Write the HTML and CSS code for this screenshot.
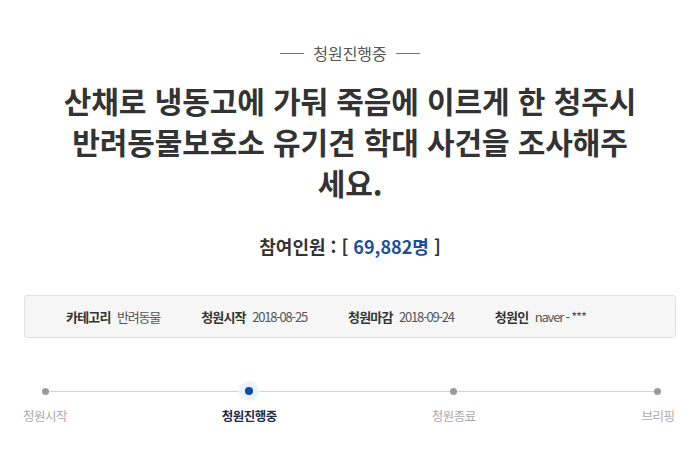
FILE: index.html
```html
<!DOCTYPE html>
<html lang="ko">
    <head>
        <meta charset="UTF-8">
        <meta name="viewport" content="width=device-width, initial-scale=1.0">
        <title>청원진행중</title>
        <link rel="stylesheet" href="styles.css">
    </head>
    <body>
        <div class="petition">
            <div class="status"><span>청원진행중</span></div>
            <h3 class="title">산채로 냉동고에 가둬 죽음에 이르게 한 청주시<br>반려동물보호소 유기견 학대 사건을 조사해주<br>세요.</h3>
            <h2 class="count">참여인원 : [ <span>69,882명</span> ]</h2>
            <ul class="info">
                <li><b>카테고리</b> 반려동물</li>
                <li><b>청원시작</b> 2018-08-25</li>
                <li><b>청원마감</b> 2018-09-24</li>
                <li><b>청원인</b> naver - ***</li>
            </ul>
            <ol class="steps">
                <li><i></i><span>청원시작</span></li>
                <li class="on"><i></i><span>청원진행중</span></li>
                <li><i></i><span>청원종료</span></li>
                <li><i></i><span>브리핑</span></li>
            </ol>
        </div>
    </body>
</html>
```

FILE: styles.css
```css
body {
    margin: 0;
    background: #fff;
    color: #333;
    font-family: "Noto Sans CJK KR", "Noto Sans", sans-serif;
}
.petition {
    padding: 43px 24px 0;
}
.status {
    display: flex;
    justify-content: center;
    align-items: center;
    gap: 9px;
    font-size: 16px;
    line-height: 20px;
    color: #555;
}
.status::before,
.status::after {
    content: "";
    width: 24px;
    height: 1px;
    background: #777;
}
.title {
    margin: 17px 0 0;
    text-align: center;
    font-size: 30px;
    line-height: 41px;
    font-weight: bold;
    letter-spacing: -0.1px;
    color: #333;
}
.count {
    margin: 29px 0 0;
    text-align: center;
    font-size: 18px;
    line-height: 28px;
    font-weight: bold;
    color: #333;
}
.count span {
    color: #1b4f9c;
}
.info {
    list-style: none;
    margin: 35px 0 0;
    padding: 0 0 0 41px;
    height: 41px;
    display: flex;
    align-items: center;
    gap: 41px;
    background: #f6f6f6;
    border: 1px solid #e1e1e1;
    border-radius: 3px;
    font-size: 13px;
    letter-spacing: -1.2px;
    color: #555;
}
.info b {
    color: #333;
    margin-right: 4px;
    letter-spacing: -0.8px;
}
.steps {
    list-style: none;
    margin: 43px -3px 0 0;
    padding: 0;
    display: flex;
    justify-content: space-between;
    position: relative;
}
.steps::before {
    content: "";
    position: absolute;
    left: 21px;
    right: 21px;
    top: 10px;
    height: 1px;
    background: #d3d3d3;
}
.steps li {
    width: 42px;
    display: flex;
    flex-direction: column;
    align-items: center;
    position: relative;
}
.steps i {
    width: 22px;
    height: 20px;
    display: flex;
    align-items: center;
    justify-content: center;
}
.steps i::after {
    content: "";
    width: 7px;
    height: 7px;
    border-radius: 50%;
    background: #9a9a9a;
}
.steps span {
    margin-top: 6px;
    white-space: nowrap;
    font-size: 12.5px;
    line-height: 18px;
    letter-spacing: -0.5px;
    color: #aaa;
}
.steps .on i {
    border-radius: 50%;
    background: radial-gradient(circle, #dce9f9 0, #eef4fc 60%, rgba(238, 244, 252, 0) 100%);
}
.steps .on i::after {
    width: 8px;
    height: 8px;
    background: #0b4da6;
}
.steps .on span {
    font-weight: bold;
    color: #1f2d45;
}
```
